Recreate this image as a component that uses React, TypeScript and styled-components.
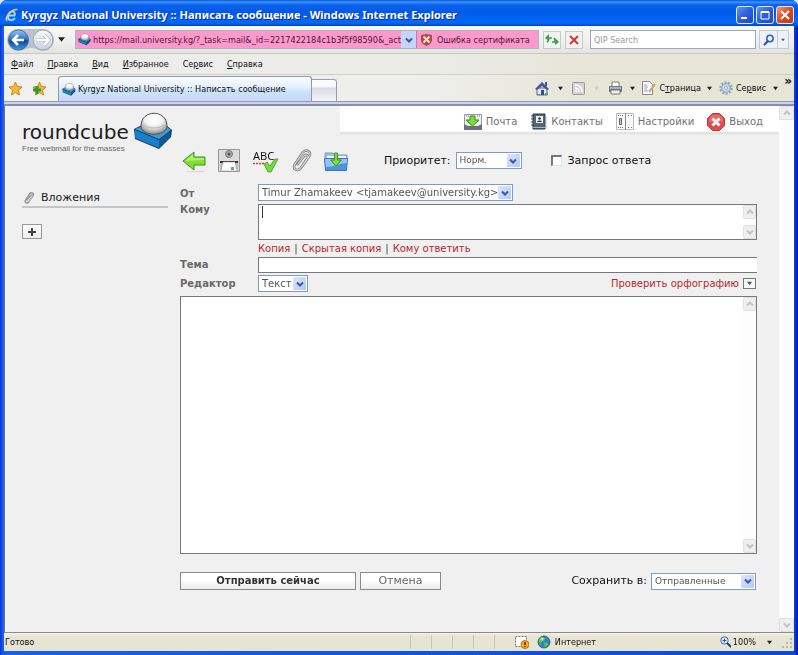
import React from "react";
import styled, { createGlobalStyle } from "styled-components";

const ui = `"DejaVu Sans Condensed", "DejaVu Sans", sans-serif`;
const web = `"DejaVu Sans", Verdana, sans-serif`;

const GlobalStyle = createGlobalStyle`
  * { box-sizing: border-box; }
  body { margin: 0; background: #dbe6f6; }
  button, input, select, textarea { font: inherit; color: inherit; margin: 0; border-radius: 0; outline: none; }
  button { padding: 0; border: 0; background: none; cursor: pointer; }
  svg { display: block; flex: none; }
`;

/* ---------- window ---------- */
const Window = styled.div`
  display: flex;
  flex-direction: column;
  min-height: 100vh;
  padding: 0 4px 4px;
  border-radius: 7px 7px 0 0;
  background: linear-gradient(90deg, #0a34d0 0, #1560f0 3px, #0c48d8 calc(100% - 4px), #0018a0 100%);
  font: 9px/14px ${ui};
  color: #111;
`;
const TitleBar = styled.header`
  display: flex;
  align-items: center;
  gap: 3px;
  height: 26px;
  margin: 0 -4px;
  padding: 3px 4px 0 5px;
  border-radius: 7px 7px 0 0;
  background: linear-gradient(#0a56d8 0, #3a92ff 2px, #0a62ee 5px, #0058e4 12px, #0468fa 20px, #0466f8 23px, #0044c8 26px);
`;
const Title = styled.h1`
  flex: 1;
  margin: 0;
  font: bold 11px/18px "Noto Sans", sans-serif;
  color: #fff;
  text-shadow: 1px 1px 0 #0a2a90;
  white-space: nowrap;
  overflow: hidden;
`;
const CaptionButton = styled.button<{ $close?: boolean }>`
  display: grid;
  place-items: center;
  width: 18px;
  height: 18px;
  margin-left: -1px;
  border: 1px solid #dfe8ff;
  border-radius: 3px;
  background: ${(p) => (p.$close ? "linear-gradient(135deg, #f09878, #dc4a20 50%, #c03c14)" : "linear-gradient(135deg, #6a94f4, #2c5ce0 50%, #1c48c4)")};
`;

/* ---------- browser chrome ---------- */
const NavBar = styled.div`
  display: flex;
  align-items: center;
  height: 28px;
  padding: 0 5px 0 3px;
  background: linear-gradient(#f8f8f4, #efefed 60%, #e4e4de);
  border-bottom: 1px solid #c9c9c0;
`;
const PlainButton = styled.button<{ $w?: number }>`
  display: grid;
  place-items: center;
  width: ${(p) => (p.$w ? p.$w + "px" : "auto")};
  flex: none;
`;
const Address = styled.div`
  display: flex;
  flex: 1;
  align-items: stretch;
  height: 19px;
  margin-left: 8px;
  border: 1px solid #a9b4c4;
  background: #ff99cc;
`;
const AddressIcon = styled.span`
  display: grid;
  place-items: center;
  width: 17px;
`;
const AddressInput = styled.input`
  flex: 1;
  min-width: 0;
  padding: 0;
  border: 0;
  background: transparent;
  color: #4a1838;
`;
const AddressDrop = styled.button`
  display: grid;
  place-items: center;
  width: 15px;
  background: #c6d6f8;
`;
const Certificate = styled.button`
  display: flex;
  align-items: center;
  gap: 5px;
  width: 122px;
  padding-left: 4px;
  border-left: 1px solid #c080a8;
  color: #4a1838;
  white-space: nowrap;
`;
const BoxButton = styled.button`
  display: grid;
  place-items: center;
  width: 18px;
  height: 18px;
  margin-left: 4px;
  border: 1px solid #c4c8d0;
  background: #f2f2f0;
`;
const Search = styled.input`
  width: 166px;
  height: 19px;
  margin-left: 7px;
  padding: 0 3px;
  border: 1px solid #94a8c0;
  background: #fff;
  &::placeholder { color: #9a9a9a; opacity: 1; }
`;
const SearchButtons = styled.div`
  display: flex;
  height: 19px;
  margin-left: 3px;
  border: 1px solid #c0cada;
  background: #eef1f6;
`;
const SearchPart = styled.button<{ $w: number }>`
  display: grid;
  place-items: center;
  width: ${(p) => p.$w}px;
  & + & { border-left: 1px solid #c0cada; }
`;
const MenuBar = styled.nav`
  display: flex;
  align-items: center;
  gap: 14px;
  height: 21px;
  padding: 0 7px;
  background: linear-gradient(90deg, #eeeeec, #ebebe8 55%, #e6e5d6 75%);
  border-bottom: 1px solid #cfcfc6;
`;
const CommandBar = styled.div`
  display: flex;
  align-items: center;
  height: 27px;
  padding: 0 2px 0 4px;
  background: linear-gradient(90deg, #f0f0ee, #eeeeea 55%, #e6e5d6 75%);
  border-bottom: 1px solid #8f9aac;
`;
const Tab = styled.div`
  display: flex;
  align-items: center;
  align-self: flex-end;
  gap: 2px;
  width: 254px;
  height: 25px;
  margin-left: 3px;
  padding: 0 3px;
  border: 1px solid #8f9aac;
  border-bottom: 0;
  border-radius: 3px 3px 0 0;
  background: linear-gradient(#fafcff, #e4effc 45%, #c8e4fa 60%, #ccd6f6);
  white-space: nowrap;
`;
const NewTab = styled.button`
  align-self: flex-end;
  width: 25px;
  height: 22px;
  border: 1px solid #9a9fac;
  border-left: 0;
  border-bottom: 0;
  border-radius: 0 3px 0 0;
  background: linear-gradient(#fafafa 30%, #dcdce8 40%, #f4f4f8);
`;
const Tools = styled.div`
  display: flex;
  align-items: center;
  margin-left: auto;
  height: 22px;
`;
const Tool = styled.button`
  display: flex;
  align-items: center;
  gap: 3px;
  white-space: nowrap;
`;
const More = styled.span`
  align-self: flex-start;
  font: bold 12px/8px ${web};
`;
const TabStrip = styled.div`
  height: 4px;
  background: #ccd2f4;
  border-bottom: 2px solid #8590a4;
`;

/* ---------- web page ---------- */
const Viewport = styled.main`
  display: flex;
  flex: 1;
  border-left: 1px solid #6c7684;
  border-bottom: 1px solid #8c8c84;
  background: #f0f0f0;
  font: 11px/14px ${web};
`;
const Page = styled.div`
  display: grid;
  grid-template-columns: 158px 1fr;
  flex: 1;
  min-width: 0;
  padding-left: 17px;
`;
const Side = styled.aside`
  padding-top: 6px;
`;
const Logo = styled.a`
  display: flex;
  gap: 5px;
  height: 41px;
  color: #1c1c1c;
  text-decoration: none;
`;
const LogoName = styled.div`
  width: 106px;
  padding-top: 8px;
  font: 20px/24px ${web};
  white-space: nowrap;
`;
const Tagline = styled.div`
  font: 8px/10px "Liberation Sans", sans-serif;
  color: #666;
`;
const SideTitle = styled.h2`
  display: flex;
  align-items: center;
  gap: 6px;
  width: 146px;
  height: 20px;
  margin: 35px 0 16px;
  padding: 2px 0 0 1px;
  border-bottom: 2px solid #c6c6c6;
  font: 11px/16px ${web};
  color: #222;
`;
const AddButton = styled.button`
  display: grid;
  place-items: center;
  width: 20px;
  height: 15px;
  border: 1px solid #9a9a9a;
  background: linear-gradient(#fff, #eee);
`;
const Content = styled.section`
  display: flex;
  flex-direction: column;
  min-width: 0;
`;
const TaskBar = styled.nav`
  display: flex;
  justify-content: flex-end;
  gap: 13px;
  height: 29px;
  margin-left: 160px;
  padding: 2px 16px 0 0;
  background: linear-gradient(#fff 25px, #dedede 27px, #f0f0f0 29px);
`;
const TaskLink = styled.a`
  display: flex;
  align-items: center;
  gap: 4px;
  height: 27px;
  font-size: 10px;
  color: #707070;
  text-decoration: none;
`;
const Compose = styled.form`
  display: flex;
  flex: 1;
  flex-direction: column;
  padding: 13px 22px 42px 0;
`;
const Toolbar = styled.div`
  display: flex;
  align-items: center;
  height: 25px;
  padding-left: 2px;
`;
const ToolIcon = styled.button<{ $gap: number }>`
  margin-right: ${(p) => p.$gap}px;
`;
const Priority = styled.div`
  display: flex;
  align-items: center;
  gap: 5px;
  margin-left: 35px;
`;
const Receipt = styled.label`
  display: flex;
  align-items: center;
  gap: 6px;
  margin-left: 29px;
`;
const Check = styled.input`
  appearance: none;
  width: 11px;
  height: 11px;
  border: 1px solid #e2e2e2;
  border-top: 2px solid #777;
  border-left: 2px solid #777;
  background: #fff;
`;
const SelectBox = styled.span<{ $w: number }>`
  position: relative;
  display: block;
  width: ${(p) => p.$w}px;
  height: 17px;
  border: 1px solid #7f9db9;
  background: #fff;
`;
const SelectInput = styled.select<{ $size?: number }>`
  appearance: none;
  display: block;
  width: 100%;
  height: 15px;
  padding: 0 14px 0 3px;
  border: 0;
  background: transparent;
  color: #555;
  font: ${(p) => p.$size ?? 10}px/15px ${web};
`;
const SelectArrow = styled.span`
  position: absolute;
  top: 1px;
  right: 1px;
  display: grid;
  place-items: center;
  width: 13px;
  height: 13px;
  border-radius: 1px;
  background: linear-gradient(135deg, #dbe6fe, #b4c8f6);
  pointer-events: none;
`;
const Fields = styled.div`
  display: grid;
  grid-template-columns: 78px 1fr;
  grid-template-rows: 20px 36px 17px 16px 23px;
  margin-top: 11px;
  color: #444;
`;
const FieldLabel = styled.label<{ $top: number }>`
  padding-top: ${(p) => p.$top}px;
  font: bold 10px/12px ${web};
  color: #6a6a6a;
`;
const TextFrame = styled.div<{ $h?: number }>`
  display: flex;
  min-height: ${(p) => p.$h ?? 36}px;
  border: 1px solid #777;
  background: #fff;
`;
const TextArea = styled.textarea<{ $caret?: boolean }>`
  display: block;
  flex: 1;
  min-width: 0;
  height: auto;
  padding: 1px 3px;
  border: 0;
  background: ${(p) => (p.$caret ? "linear-gradient(#333, #333) 3px 1px / 1px 12px no-repeat" : "transparent")};
  caret-color: ${(p) => (p.$caret ? "transparent" : "auto")};
  resize: none;
  overflow: hidden;
`;
const ScrollColumn = styled.div<{ $wide?: boolean }>`
  display: flex;
  flex-direction: column;
  justify-content: space-between;
  width: ${(p) => (p.$wide ? 15 : 13)}px;
  flex: none;
  background: #fdfdfd;
`;
const ScrollButton = styled.button`
  display: grid;
  place-items: center;
  width: 100%;
  height: 14px;
  border: 1px solid #e0e0e0;
  border-radius: 2px;
  background: #efefef;
`;
const Links = styled.div`
  grid-column: 2;
  display: flex;
  gap: 4px;
  padding-top: 2px;
  font: 10px/14px ${web};
  color: #444;
`;
const RedLink = styled.a`
  color: #b8282c;
  text-decoration: none;
`;
const Subject = styled.input`
  width: 100%;
  height: 16px;
  padding: 0 3px;
  border: 1px solid #777;
  border-right: 0;
  background: #fff;
`;
const EditorRow = styled.div`
  display: flex;
  justify-content: space-between;
  padding-top: 2px;
`;
const Spell = styled.div`
  display: flex;
  align-items: center;
  gap: 4px;
  height: 17px;
  padding-right: 1px;
  font: 10px/14px ${web};
`;
const TinyButton = styled.button`
  display: grid;
  place-items: center;
  width: 13px;
  height: 11px;
  border: 1px solid #777;
  background: #f6f6f6;
`;
const Message = styled(TextFrame)`
  flex: 1;
`;
const Actions = styled.div`
  display: flex;
  align-items: center;
  gap: 4px;
  margin-top: 18px;
  padding-right: 1px;
`;
const ActionButton = styled.button<{ $w: number; $main?: boolean }>`
  width: ${(p) => p.$w}px;
  height: 18px;
  border: 1px solid #8a8a8a;
  background: linear-gradient(#fff 40%, #ececec);
  color: ${(p) => (p.$main ? "#333" : "#666")};
  font: ${(p) => (p.$main ? "bold 10px" : "11px")}/14px ${web};
`;
const SaveIn = styled.div`
  display: flex;
  align-items: center;
  gap: 4px;
  margin-left: auto;
`;

/* ---------- status bar ---------- */
const StatusBar = styled.footer`
  display: flex;
  align-items: center;
  height: 18px;
  padding: 0 1px;
  background: linear-gradient(#f2f1e6, #e6e5d4 4px);
`;
const StatusText = styled.span`
  flex: 1;
`;
const Cell = styled.span`
  width: 21px;
  height: 14px;
  border-left: 1px solid #c9c8b8;
`;
const Zone = styled.span`
  display: flex;
  align-items: center;
  gap: 4px;
  width: 205px;
`;
const ZoomButton = styled.button`
  display: flex;
  align-items: center;
  gap: 2px;
`;

/* ---------- icons ---------- */
const Triangle = ({ c = "#222", s = 5 }: { c?: string; s?: number }) => (
  <svg width={s} height={s} viewBox="0 0 6 6"><path d="M0 1h6L3 5z" fill={c} /></svg>
);
const Chevron = ({ up, c = "#3c5a98" }: { up?: boolean; c?: string }) => (
  <svg width="8" height="6" viewBox="0 0 8 6"><path d={up ? "M1 4.5 4 1.5 7 4.5" : "M1 1.5 4 4.5 7 1.5"} fill="none" stroke={c} strokeWidth="2" /></svg>
);
const Cube = ({ w, h }: { w: number; h: number }) => (
  <svg width={w} height={h} viewBox="0 0 40 38">
    <defs>
      <radialGradient id="ball" cx=".5" cy=".35" r=".65"><stop offset="0" stopColor="#fff" /><stop offset=".6" stopColor="#dedede" /><stop offset="1" stopColor="#888" /></radialGradient>
    </defs>
    <path d="M1 17 9 13 33 13 39 18 38 25 26 37 2 27z" fill="#123a5c" />
    <path d="M2 17 10 14 32 13 38 18 26 27z" fill="#3c9cd4" />
    <path d="M2 18 26 28 26 36 2 26z" fill="#1880c8" />
    <path d="M26 28 38 19 37 25 26 36z" fill="#0c5c98" />
    <path d="M8 14C8-3 34-3 34 14c0 11-26 11-26 0z" fill="url(#ball)" stroke="#555" strokeWidth="1" />
    <ellipse cx="21" cy="8" rx="10" ry="6" fill="#fff" opacity=".6" />
    <path d="M11 13c4 4 16 4 20 0" fill="none" stroke="#bbb" />
  </svg>
);
const IeLogo = () => (
  <svg width="13" height="14" viewBox="0 0 13 14">
    <path d="M10 10C8 13 3 13 3 9 3 5 6 3 8 3.500 10 4 10 6 9.500 7.500H4" fill="none" stroke="#9ed8ff" strokeWidth="2" />
    <path d="M2 13C-1 11 5 1 12.500 1.500" fill="none" stroke="#f2c850" strokeWidth="1.500" />
  </svg>
);
const BackForward = () => (
  <svg width="48" height="24" viewBox="0 0 48 24">
    <defs>
      <linearGradient id="bk" x2="0" y2="1"><stop stopColor="#9cc8f4" /><stop offset=".45" stopColor="#2c74cc" /><stop offset=".55" stopColor="#0c44a0" /><stop offset="1" stopColor="#3c9ce8" /></linearGradient>
      <linearGradient id="fw" x2="0" y2="1"><stop stopColor="#fbfcfe" /><stop offset=".5" stopColor="#dde2ea" /><stop offset="1" stopColor="#ccd3de" /></linearGradient>
    </defs>
    <path d="M11 1h25a11 11 0 0 1 0 22c-5 0-7-3-12-3s-7 3-13 3A11 11 0 0 1 11 1z" fill="#b9c3d2" />
    <circle cx="11.500" cy="12" r="10" fill="url(#bk)" stroke="#4a6c9c" />
    <circle cx="36" cy="12" r="10" fill="url(#fw)" stroke="#98a4b8" />
    <path d="M17 12H7M11 7l-5 5 5 5" fill="none" stroke="#fff" strokeWidth="2.600" />
    <path d="M30 12h11M37 7l5 5-5 5" fill="none" stroke="#aab4c4" strokeWidth="3.600" />
    <path d="M30 12h11M37 7l5 5-5 5" fill="none" stroke="#fff" strokeWidth="2.400" />
  </svg>
);
const Shield = () => (
  <svg width="11" height="12" viewBox="0 0 11 12"><path d="M0 1 5.500 0 11 1v5c0 3-3 5-5.500 6C3 11 0 9 0 6z" fill="#b04c44" /><path d="M2.500 2.500l6 6M8.500 2.500l-6 6" stroke="#f6dcd0" strokeWidth="2" /></svg>
);
const Refresh = () => (
  <svg width="14" height="12" viewBox="0 0 14 12"><path d="M7 4H3M4 4c0 2 0 3-2 4M7 8h4M10 8c0-2 0-3-1-4" fill="none" stroke="#38a048" strokeWidth="1.500" /><path d="M0 4 4 0v7zM14 8l-4-4v7z" fill="#38a048" /></svg>
);
const Cross = ({ c = "#c83c34", s = 10 }: { c?: string; s?: number }) => (
  <svg width={s} height={s} viewBox="0 0 10 10"><path d="M1 1l8 8M9 1 1 9" stroke={c} strokeWidth="2" /></svg>
);
const Lens = () => (
  <svg width="11" height="12" viewBox="0 0 11 12"><circle cx="7" cy="4.500" r="3.200" fill="#e8f2ff" stroke="#2c60c0" strokeWidth="1.500" /><path d="M5 7 1 11" stroke="#2c50b0" strokeWidth="2.200" /></svg>
);
const Star = ({ add }: { add?: boolean }) => (
  <svg width="15" height="15" viewBox="0 0 15 15">
    <path d="M7.500 1 9.300 5.500 14 6l-3.500 3.200L11.500 14l-4-2.500-4 2.500 1-4.800L1 6l4.700-.5z" fill="#fcb830" stroke="#c87c18" strokeWidth=".9" />
    {add && <path d="M5 5v8M1 9h8" stroke="#2c9c2c" strokeWidth="3" />}
  </svg>
);
const Home = () => (
  <svg width="14" height="15" viewBox="0 0 14 15"><path d="M2 7h10v7H2z" fill="#e6e8f4" stroke="#5460a0" /><path d="M0 8 7 1l7 7-2 1-5-4-5 4z" fill="#4454a0" /><path d="M10 1h2v4h-2z" fill="#4454a0" /><path d="M6 9h3v5H6z" fill="#384c8c" /><path d="M2 13h3v1H2zM10 12h3v2h-3z" fill="#58a050" /></svg>
);
const Feed = () => (
  <svg width="13" height="13" viewBox="0 0 13 13"><rect x=".5" y=".5" width="12" height="12" rx="1" fill="#d4d4d4" stroke="#999" /><path d="M3 6c3 0 4 2 4 4M3 3c5 0 7 3 7 7" fill="none" stroke="#fff" strokeWidth="1.500" /><circle cx="4" cy="9" r="1.200" fill="#fff" /></svg>
);
const Printer = () => (
  <svg width="15" height="14" viewBox="0 0 15 14"><path d="M4 1h7v5H4z" fill="#fff" stroke="#777" /><path d="M1 5h13v6H1z" fill="#777b84" /><path d="M2 6h11v2H2z" fill="#adb2bc" /><path d="M3 9h9v4H3z" fill="#eee" stroke="#666" strokeWidth=".8" /></svg>
);
const PageIcon = () => (
  <svg width="15" height="14" viewBox="0 0 15 14"><path d="M1.500.5h7l3 3v10h-10z" fill="#fcfcfc" stroke="#888" /><path d="M3 4h3M3 6h4M3 8h3M3 10h4" stroke="#90a4c8" /><path d="M14 3 8 11" stroke="#d8a050" strokeWidth="2" /></svg>
);
const Gear = () => (
  <svg width="14" height="14" viewBox="0 0 14 14"><circle cx="7" cy="7" r="5.500" fill="none" stroke="#98a6b8" strokeWidth="2.500" strokeDasharray="2 1.400" /><circle cx="7" cy="7" r="4.300" fill="#c0dcf0" stroke="#8ca4c0" /><circle cx="7" cy="7" r="1.600" fill="#f4f4f4" stroke="#8098b4" strokeWidth=".7" /></svg>
);
const Clip = ({ s }: { s: number }) => (
  <svg width={s} height={s} viewBox="0 0 24 24" fill="none">
    <path d="M8 16 15 7c2-2 5 0 3 3L11 20c-3 4-9 1-6-4L13 4c4-5 10-1 7 4l-8 11" stroke="#777" strokeWidth="2.600" strokeLinecap="round" />
    <path d="M8 16 15 7c2-2 5 0 3 3L11 20c-3 4-9 1-6-4L13 4c4-5 10-1 7 4l-8 11" stroke="#d4d4d4" strokeWidth="1.200" strokeLinecap="round" />
  </svg>
);
const Inbox = () => (
  <svg width="18" height="18" viewBox="0 0 18 18"><path d="M.5 1.500h17v13H.5z" fill="#eee" stroke="#999" /><path d="M2 3h3M13 3h3" stroke="#777" strokeDasharray="1 1" /><path d="M0 11l4 2h10l4-2v6H0z" fill="#6c7078" /><path d="M6 3h5v4h4L8.500 13 2 7h4z" fill="#7cdc38" stroke="#3c8c1c" /></svg>
);
const Book = () => (
  <svg width="17" height="18" viewBox="0 0 17 18"><path d="M3 1h12v15H3z" fill="#52677c" stroke="#2c3c50" /><path d="M1 3h3M1 6h3M1 9h3M1 12h3" stroke="#444" /><path d="M6 3h7v7H6z" fill="#f0f0f0" /><circle cx="9.500" cy="5.500" r="1.300" fill="#333" /><path d="M7 9c1-2 4-2 5 0z" fill="#333" /><path d="M3 14.500h12M16 3v13" stroke="#a8b8c8" /></svg>
);
const Sheets = () => (
  <svg width="18" height="17" viewBox="0 0 18 17"><path d="M.5.500h17v16H.5z" fill="#fafafa" stroke="#bbb" /><path d="M9.500 0v17" stroke="#888" /><path d="M2 2.500h5M2 14.500h5M12 2.500h1M15 2.500h1M12 14.500h1M15 14.500h1" stroke="#777" strokeDasharray="1 1" /><path d="M3.500 5.500h2v6h-2z" fill="#ccc" stroke="#666" /></svg>
);
const Exit = () => (
  <svg width="18" height="18" viewBox="0 0 18 18"><path d="M5.500.5h7l5 5v7l-5 5h-7l-5-5v-7z" fill="#e04c4c" stroke="#b83838" /><path d="M5 2h8l3 4v3H2V6z" fill="#f07c78" opacity=".6" /><path d="M5.500 5.500l7 7M12.500 5.500l-7 7" stroke="#fff" strokeWidth="2.800" /></svg>
);
const ArrowBack = () => (
  <svg width="24" height="24" viewBox="0 0 24 24"><path d="M1 12 12 3v5h11v8H12v5z" fill="#80e030" stroke="#3c9020" /><path d="M3 12 11 5v4h11v2z" fill="#b8f47c" opacity=".8" /><path d="M5 22.500h17" stroke="#ecd0d0" /></svg>
);
const Send = () => (
  <svg width="22" height="24" viewBox="0 0 22 24"><path d="M.5.500h21v22H.5z" fill="#dcdcdc" stroke="#999" /><circle cx="11" cy="5" r="3.500" fill="#aaa" stroke="#777" /><circle cx="11" cy="5" r="1.500" fill="#555" /><path d="M2 12h18v2H2z" fill="#333" /><path d="M2 14h18v8H2z" fill="#bbb" /><path d="M5 13h12l2 9H3z" fill="#fff" stroke="#999" strokeWidth=".6" /><path d="M13 18h3v3h-3z" fill="#6c94d0" /></svg>
);
const AbcBox = styled.span`
  position: relative;
  display: block;
  width: 26px;
  height: 24px;
  font: 11px/14px "Noto Sans", sans-serif;
  color: #111;
  -webkit-text-stroke: 0;
  text-align: left;
  & svg { position: absolute; left: 0; top: 0; }
`;
const Spelling = () => (
  <AbcBox>ABC<svg width="26" height="24" viewBox="0 0 26 24"><path d="M0 14.500h12" stroke="#e03838" strokeWidth="1.500" strokeDasharray="2 1" /><path d="M11 15l3-2 3 4 5-7h3l-7 13h-3z" fill="#74dc38" stroke="#3c9420" strokeWidth=".8" /></svg></AbcBox>
);
const SaveFolder = () => (
  <svg width="25" height="24" viewBox="0 0 25 24"><path d="M1 4h8l2 2h12v5H1z" fill="#9cc0e4" stroke="#7c9cbc" /><path d="M3 7h19v6H3z" fill="#f4f8fc" /><path d="M.5 9.500h23l-1 12h-21z" fill="#4c94dc" stroke="#3c74b0" /><path d="M1 10h22v4c-8 0-12 4-21 4z" fill="#b4d8f8" opacity=".7" /><path d="M10.500 4h3v7h4l-5.500 6-5.500-6h4z" fill="#80dc38" stroke="#3c8c1c" strokeWidth=".9" /></svg>
);
const Warning = () => (
  <svg width="14" height="14" viewBox="0 0 14 14"><path d="M.5 1.500h11v10H.5z" fill="#fff" stroke="#777" strokeDasharray="2 1" /><circle cx="10" cy="9.500" r="4" fill="#f4ac20" stroke="#b87810" /><path d="M10 7v3M10 11v1" stroke="#222" strokeWidth="1.300" /></svg>
);
const Globe = () => (
  <svg width="14" height="14" viewBox="0 0 14 14"><circle cx="7" cy="7" r="6" fill="#3484c0" stroke="#386078" /><path d="M3 3c2-2 5-1 5 1S4 6 4 8 1 7 2 5zM7 8c2-1 4 0 4 1s-2 3-3 3z" fill="#5cc060" /><circle cx="5" cy="4" r="1.500" fill="#fff" opacity=".6" /></svg>
);
const Magnify = () => (
  <svg width="11" height="12" viewBox="0 0 11 12"><circle cx="4.500" cy="4.500" r="3.700" fill="#e4f0ff" stroke="#3868b8" /><path d="M2.500 4.500h4M4.500 2.500v4" stroke="#2858c0" /><path d="M7 7l4 4" stroke="#2c3c6c" strokeWidth="2" /></svg>
);
const Grip = () => (
  <svg width="11" height="11" viewBox="0 0 11 11"><path d="M8 1h2v2H8zM8 5h2v2H8zM8 9h2v2H8zM4 5h2v2H4zM4 9h2v2H4zM0 9h2v2H0z" fill="#bcbba8" /></svg>
);

/* ---------- composed parts ---------- */
const Select = ({ id, w, value, size }: { id: string; w: number; value: string; size?: number }) => (
  <SelectBox $w={w}>
    <SelectInput id={id} $size={size} defaultValue={value}><option>{value}</option></SelectInput>
    <SelectArrow><Chevron /></SelectArrow>
  </SelectBox>
);
const Scroll = ({ wide }: { wide?: boolean }) => (
  <ScrollColumn $wide={wide}>
    <ScrollButton type="button" aria-label="Вверх"><Chevron up c="#c4c4c4" /></ScrollButton>
    <ScrollButton type="button" aria-label="Вниз"><Chevron c="#c4c4c4" /></ScrollButton>
  </ScrollColumn>
);
const menu = [["", "Ф", "айл"], ["", "П", "равка"], ["", "В", "ид"], ["", "И", "збранное"], ["Се", "р", "вис"], ["", "С", "правка"]];
const Drop = ({ faint, w = 18 }: { faint?: boolean; w?: number }) => (
  <PlainButton $w={w} aria-label="Открыть список"><Triangle c={faint ? "#ccc" : "#222"} /></PlainButton>
);

export default function App() {
  return (
    <>
      <GlobalStyle />
      <Window>
        <TitleBar>
          <IeLogo />
          <Title>Kyrgyz National University :: Написать сообщение - Windows Internet Explorer</Title>
          <CaptionButton aria-label="Свернуть"><svg width="10" height="10"><path d="M1 7h6v2H1z" fill="#fff" /></svg></CaptionButton>
          <CaptionButton aria-label="Развернуть"><svg width="10" height="10"><path d="M1 2h8v7H1z" fill="none" stroke="#fff" /><path d="M1 1h8v2H1z" fill="#fff" /></svg></CaptionButton>
          <CaptionButton $close aria-label="Закрыть"><Cross c="#fff" /></CaptionButton>
        </TitleBar>
        <NavBar>
          <PlainButton $w={48} aria-label="Назад и вперёд"><BackForward /></PlainButton>
          <PlainButton $w={12} aria-label="Журнал"><Triangle s={7} /></PlainButton>
          <Address>
            <AddressIcon><Cube w={13} h={13} /></AddressIcon>
            <AddressInput aria-label="Адрес" defaultValue="https://mail.university.kg/?_task=mail&_id=2217422184c1b3f5f98590&_action=compose" />
            <AddressDrop aria-label="Список адресов"><Chevron /></AddressDrop>
            <Certificate><Shield />Ошибка сертификата</Certificate>
          </Address>
          <BoxButton aria-label="Обновить"><Refresh /></BoxButton>
          <BoxButton aria-label="Остановить"><Cross /></BoxButton>
          <Search aria-label="Поиск" placeholder="QIP Search" />
          <SearchButtons>
            <SearchPart $w={17} aria-label="Найти"><Lens /></SearchPart>
            <SearchPart $w={11} aria-label="Параметры поиска"><Triangle c="#3c5a98" s={4} /></SearchPart>
          </SearchButtons>
        </NavBar>
        <MenuBar>
          {menu.map(([a, b, c]) => <PlainButton key={b + c}><span>{a}<u>{b}</u>{c}</span></PlainButton>)}
        </MenuBar>
        <CommandBar>
          <PlainButton $w={15} aria-label="Избранное"><Star /></PlainButton>
          <PlainButton $w={32} aria-label="Добавить в избранное"><Star add /></PlainButton>
          <Tab><Cube w={14} h={13} />Kyrgyz National University :: Написать сообщение</Tab>
          <NewTab aria-label="Новая вкладка" />
          <Tools>
            <Tool aria-label="Домой"><Home /></Tool><Drop w={23} />
            <Tool aria-label="Каналы"><Feed /></Tool><Drop faint w={23} />
            <Tool aria-label="Печать"><Printer /></Tool><Drop />
            <Tool><PageIcon /><span>С<u>т</u>раница</span></Tool><Drop />
            <Tool><Gear /><span>Се<u>р</u>вис</span></Tool><Drop />
            <More>»</More>
          </Tools>
        </CommandBar>
        <TabStrip />
        <Viewport>
          <Page>
            <Side>
              <Logo href="#">
                <LogoName>roundcube<Tagline>Free webmail for the masses</Tagline></LogoName>
                <Cube w={40} h={38} />
              </Logo>
              <SideTitle><Clip s={12} />Вложения</SideTitle>
              <AddButton aria-label="Добавить вложение"><svg width="8" height="8"><path d="M4 0v8M0 4h8" stroke="#444" strokeWidth="2" /></svg></AddButton>
            </Side>
            <Content>
              <TaskBar>
                <TaskLink href="#"><Inbox />Почта</TaskLink>
                <TaskLink href="#"><Book />Контакты</TaskLink>
                <TaskLink href="#"><Sheets />Настройки</TaskLink>
                <TaskLink href="#"><Exit />Выход</TaskLink>
              </TaskBar>
              <Compose onSubmit={(e) => e.preventDefault()}>
                <Toolbar>
                  <ToolIcon type="button" $gap={12} aria-label="Назад"><ArrowBack /></ToolIcon>
                  <ToolIcon type="button" $gap={13} aria-label="Отправить"><Send /></ToolIcon>
                  <ToolIcon type="button" $gap={11} aria-label="Орфография"><Spelling /></ToolIcon>
                  <ToolIcon type="button" $gap={11} aria-label="Вложить файл"><Clip s={23} /></ToolIcon>
                  <ToolIcon type="button" $gap={0} aria-label="Сохранить черновик"><SaveFolder /></ToolIcon>
                  <Priority><label htmlFor="priority">Приоритет:</label><Select id="priority" w={66} value="Норм." size={9} /></Priority>
                  <Receipt><Check type="checkbox" />Запрос ответа</Receipt>
                </Toolbar>
                <Fields>
                  <FieldLabel htmlFor="from" $top={4}>От</FieldLabel>
                  <Select id="from" w={255} value="Timur Zhamakeev <tjamakeev@university.kg>" />
                  <FieldLabel htmlFor="to" $top={0}>Кому</FieldLabel>
                  <TextFrame><TextArea id="to" $caret autoFocus /><Scroll /></TextFrame>
                  <Links>
                    <RedLink href="#">Копия</RedLink>|<RedLink href="#">Скрытая копия</RedLink>|<RedLink href="#">Кому ответить</RedLink>
                  </Links>
                  <FieldLabel htmlFor="subject" $top={2}>Тема</FieldLabel>
                  <Subject id="subject" />
                  <FieldLabel htmlFor="editor" $top={5}>Редактор</FieldLabel>
                  <EditorRow>
                    <Select id="editor" w={50} value="Текст" />
                    <Spell><RedLink href="#">Проверить орфографию</RedLink><TinyButton type="button" aria-label="Язык проверки"><Triangle c="#555" /></TinyButton></Spell>
                  </EditorRow>
                </Fields>
                <Message $h={120}><TextArea aria-label="Текст сообщения" /><Scroll /></Message>
                <Actions>
                  <ActionButton $main $w={176}>Отправить сейчас</ActionButton>
                  <ActionButton type="button" $w={81}>Отмена</ActionButton>
                  <SaveIn><label htmlFor="folder">Сохранить в:</label><Select id="folder" w={105} value="Отправленные" size={9} /></SaveIn>
                </Actions>
              </Compose>
            </Content>
          </Page>
          <Scroll wide />
        </Viewport>
        <StatusBar>
          <StatusText>Готово</StatusText>
          <Cell /><Cell /><Cell /><Cell /><Cell />
          <Zone><Warning /><span /><Globe />Интернет</Zone>
          <ZoomButton><Magnify />100%</ZoomButton>
          <Drop w={26} />
          <Grip />
        </StatusBar>
      </Window>
    </>
  );
}
